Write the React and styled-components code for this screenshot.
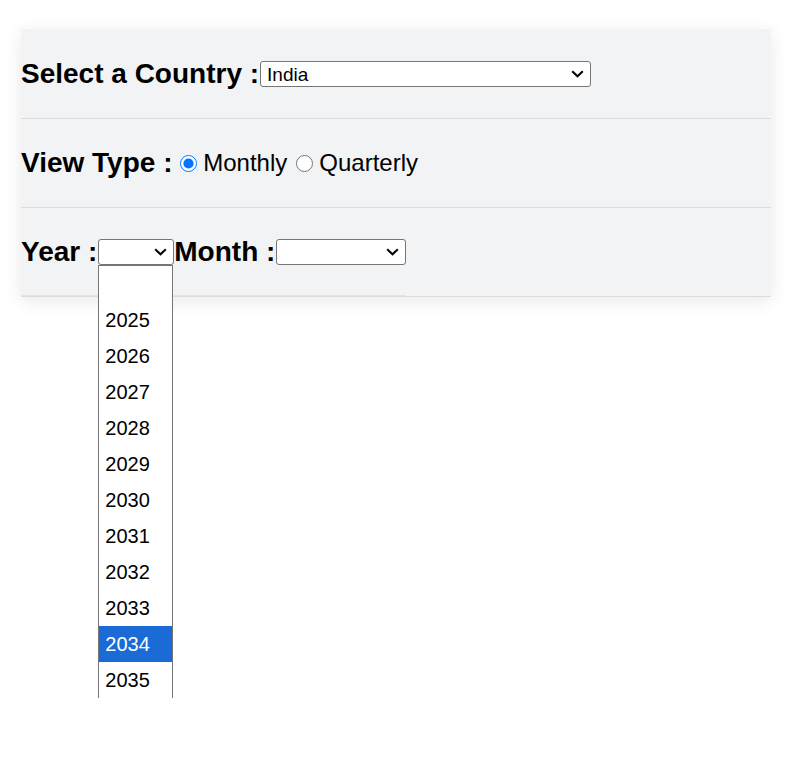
import React, { useState } from "react";
import styled, { createGlobalStyle } from "styled-components";

const GlobalStyle = createGlobalStyle`
  html, body, #root {
    min-height: 773px;
  }
  body {
    margin: 0;
    background: #ffffff;
    font-family: "Liberation Sans", Arial, sans-serif;
    color: #000;
  }
`;

const Panel = styled.div`
  margin: 29px 0 0 21px;
  width: 750px;
  padding-top: 1px;
  background-color: #f2f3f5;
  box-shadow: 0 4px 18px rgba(0, 0, 0, 0.09);
`;

const Row = styled.div`
  position: relative;
  height: 88px;
  display: flex;
  align-items: center;
  border-bottom: 1px solid #dcdcdc;

  ${({ $underline }) =>
    $underline &&
    `
    &::after {
      content: "";
      position: absolute;
      left: 0;
      bottom: 0;
      width: 385px;
      height: 1px;
      background: #e4e4e4;
    }
  `}
`;

const Label = styled.span`
  font-size: 28px;
  font-weight: bold;
  white-space: pre;
`;

const SelectBox = styled.div`
  position: relative;
  display: flex;
  margin-left: 1px;
  width: ${({ $w }) => $w}px;
`;

const Select = styled.select`
  box-sizing: border-box;
  appearance: none;
  -webkit-appearance: none;
  height: 26px;
  width: 100%;
  margin: 0;
  padding: 0 24px 0 6px;
  font-family: "Liberation Sans", Arial, sans-serif;
  font-size: 19px;
  color: #000;
  background: #fff;
  border: 1px solid #767676;
  border-radius: 3px;
  outline: none;
`;

const Chevron = styled.svg`
  position: absolute;
  right: 7px;
  top: 9px;
  width: 13px;
  height: 8px;
  pointer-events: none;
`;

const Radio = styled.input`
  width: 17px;
  height: 17px;
  margin: 0 6px 0 ${({ $ml }) => $ml}px;
  accent-color: #0075ff;
`;

const Option = styled.span`
  font-size: 24px;
`;

const OptionList = styled.ul`
  position: absolute;
  top: 26px;
  left: 0;
  width: 73px;
  height: 432px;
  box-sizing: content-box;
  margin: 0;
  padding: 0;
  list-style: none;
  background: #fff;
  border: 1px solid #767676;
  border-bottom: none;
  overflow: hidden;
  z-index: 2;
`;

const OptionItem = styled.li`
  height: 36px;
  line-height: 36px;
  padding-left: 6px;
  font-size: 20px;
  color: ${({ $active }) => ($active ? "#fff" : "#000")};
  background: ${({ $active }) => ($active ? "#1a6bd6" : "transparent")};
`;

const years = ["", "2025", "2026", "2027", "2028", "2029", "2030", "2031", "2032", "2033", "2034", "2035"];

const Dropdown = ({ w, defaultValue, options, children }) => (
  <SelectBox $w={w}>
    <Select defaultValue={defaultValue}>
      {options.map((o) => (
        <option key={o || "none"} value={o}>
          {o}
        </option>
      ))}
    </Select>
    <Chevron viewBox="0 0 13 8">
      <path d="M1.2 1.2 L6.5 6.3 L11.8 1.2" fill="none" stroke="#000" strokeWidth="2" />
    </Chevron>
    {children}
  </SelectBox>
);

export default function App() {
  const [view, setView] = useState("monthly");

  return (
    <>
      <GlobalStyle />
      <Panel>
        <Row>
          <Label>Select a Country :</Label>
          <Dropdown w={331} defaultValue="India" options={["India", "United States", "United Kingdom"]} />
        </Row>
        <Row>
          <Label>View Type : </Label>
          <Radio
            type="radio"
            name="view"
            $ml={0}
            checked={view === "monthly"}
            onChange={() => setView("monthly")}
          />
          <Option>Monthly</Option>
          <Radio
            type="radio"
            name="view"
            $ml={9}
            checked={view === "quarterly"}
            onChange={() => setView("quarterly")}
          />
          <Option>Quarterly</Option>
        </Row>
        <Row $underline>
          <Label>Year :</Label>
          <Dropdown w={76} defaultValue="" options={years}>
            <OptionList>
              {years.map((y) => (
                <OptionItem key={y || "none"} $active={y === "2034"}>
                  {y || "\u00a0"}
                </OptionItem>
              ))}
            </OptionList>
          </Dropdown>
          <Label>Month :</Label>
          <Dropdown w={130} defaultValue="" options={["", "January", "February", "March"]} />
        </Row>
      </Panel>
    </>
  );
}
